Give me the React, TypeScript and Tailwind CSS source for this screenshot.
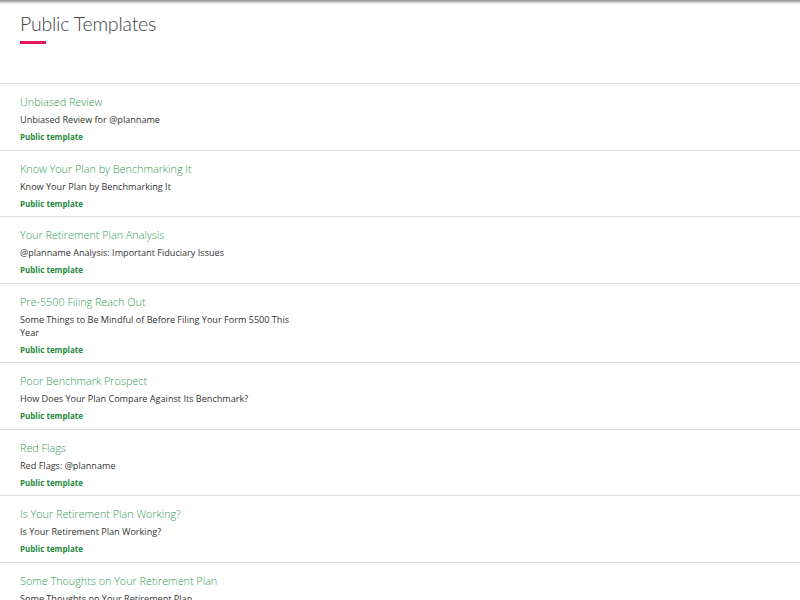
import React from "react";

const templates = [
  { title: "Unbiased Review", subject: "Unbiased Review for @planname" },
  { title: "Know Your Plan by Benchmarking It", subject: "Know Your Plan by Benchmarking It" },
  { title: "Your Retirement Plan Analysis", subject: "@planname Analysis: Important Fiduciary Issues" },
  { title: "Pre-5500 Filing Reach Out", subject: "Some Things to Be Mindful of Before Filing Your Form 5500 This Year" },
  { title: "Poor Benchmark Prospect", subject: "How Does Your Plan Compare Against Its Benchmark?" },
  { title: "Red Flags", subject: "Red Flags: @planname" },
  { title: "Is Your Retirement Plan Working?", subject: "Is Your Retirement Plan Working?" },
  { title: "Some Thoughts on Your Retirement Plan", subject: "Some Thoughts on Your Retirement Plan" },
];

const App = () => {
  return (
    <div
      className="h-[600px] w-full overflow-hidden bg-white"
      style={{ fontFamily: '"Open Sans", "Noto Sans", sans-serif' }}
    >
      <div className="h-[4px] w-full bg-linear-to-b from-[#8f8f8f] to-white" />
      <div className="h-[80px] border-b border-[#dedede] px-5 pt-[5px]">
        <h1 className="font-['Lato',sans-serif] text-[19.5px] font-light leading-[30px] tracking-[-0.2px] text-[#444]">
          Public Templates
        </h1>
        <div className="mt-[2px] h-[3px] w-[26px] bg-[#e8175d]" />
      </div>

      <ul>
        {templates.map((t) => (
          <li key={t.title} className="border-b border-[#dedede] px-5 pt-[10px] pb-[6.5px]">
            <div className="text-[10.8px] font-light leading-4 text-[#349c58]">{t.title}</div>
            <div className="mt-[3px] max-w-[280px] text-[9.1px] leading-[13px] text-[#333]">
              {t.subject}
            </div>
            <div className="mt-[5px] text-[8px] font-bold leading-3 text-[#1f8a3c]">Public template</div>
          </li>
        ))}
      </ul>
    </div>
  );
};

export default App;
